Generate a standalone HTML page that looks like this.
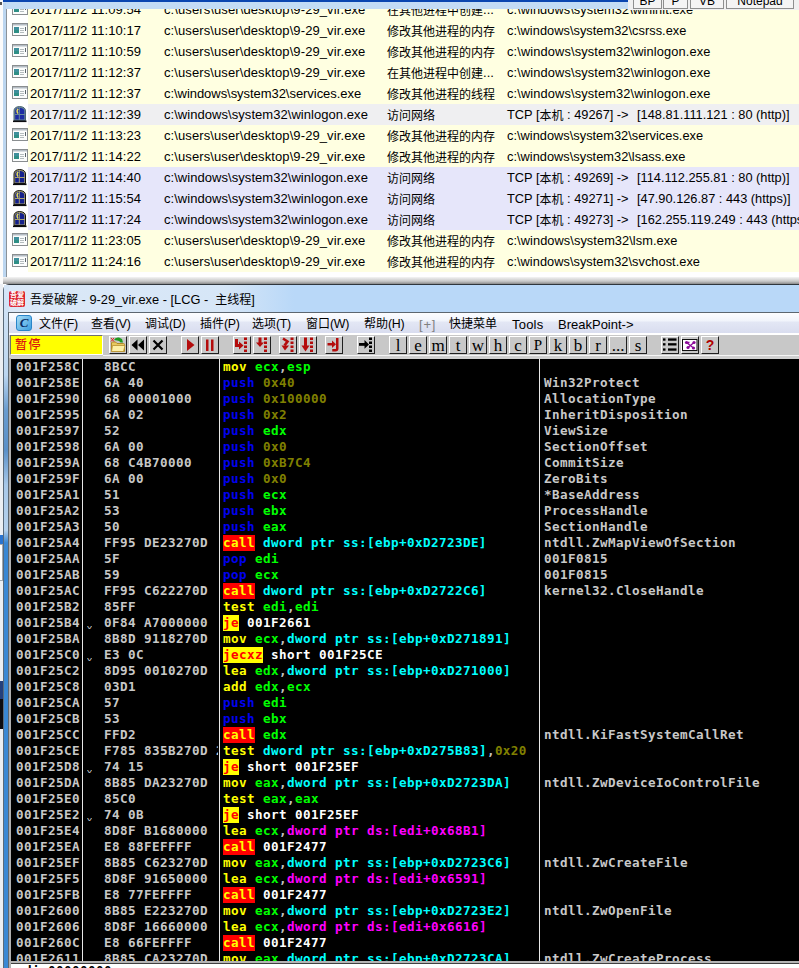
<!DOCTYPE html>
<html><head><meta charset="utf-8"><title>LCG</title>
<style>
html,body{margin:0;padding:0}
body{width:799px;height:968px;position:relative;overflow:hidden;background:#fff;font-family:"Liberation Sans","Noto Sans CJK SC",sans-serif;font-size:12px;color:#000}
div,svg{position:absolute;box-sizing:border-box}
i{font-style:normal;font-size:12px}
#top{left:0;top:0;width:799px;height:284px;background:#fff;overflow:hidden}
#list{left:7px;top:9px;width:792px;height:263px;overflow:hidden;background:#fff}
#listin{left:-7px;top:-9px;width:799px;height:290px}
.lr{left:28px;width:771px;height:21px;white-space:pre;font-size:13px;line-height:21px}
.ry{background:#ffffe1} .rg{background:#efeff1} .rl{background:#e6e6fa}
.lr>span{position:absolute;top:0;height:21px} .lr i{position:relative;top:1px}
.ic{left:-16px;top:3px} .ic2{left:-15px;top:2px}
.c1{left:2px;letter-spacing:.05px} .c2{left:136px} .c3{left:359px} .c4{left:479px;font-size:12.8px} .c5{left:609px;font-size:12.8px}
#dis{left:11px;top:359px;width:788px;height:603px;background:#000;overflow:hidden;font-family:"DejaVu Sans Mono","Liberation Mono",monospace;font-weight:bold;font-size:12.6px;letter-spacing:0.414px;white-space:pre}
.dr{left:0;width:788px;height:16px;line-height:15px}
.dr>span{position:absolute;top:0;height:16px;line-height:15px}
.a{left:5px;color:#c8c8c8} .h{left:93px;color:#c8c8c8;width:114px;overflow:hidden} .d{left:212px} .k{left:533px;color:#c8c8c8}
.mk{left:76px;color:#d0d0d0;font-family:'Liberation Sans',sans-serif;font-size:10px;letter-spacing:0;top:3px!important;font-weight:normal;transform:scaleY(.6);transform-origin:50% 70%}
.y{color:#ff0} .b{color:#0000f0} .g{color:#0f0} .o{color:#808000} .w{color:#c0c0c0} .W{color:#fff} .c{color:#0ff} .m{color:#f0f}
.cl,.j{display:inline-block;height:16px;line-height:15px;vertical-align:top}
.cl{color:#ff0;background:#f00} .j{color:#f00;background:#ff0}
.vl{top:0;width:1px;height:603px;background:#e8e8e8}
.tb{top:336px;height:18px;background:#c8c8c8;border:1px solid;border-color:#fff #202020 #202020 #fff}
.tb svg{left:0;top:0}
.lt{position:absolute;left:0;top:-1px;width:16px;text-align:center;font-family:"Liberation Serif",serif;font-size:17px;line-height:19px}
.q{position:absolute;left:0;top:0;width:16px;text-align:center;font-family:"Liberation Sans",sans-serif;font-weight:bold;font-size:14px;line-height:16px;color:#b00000}
.mi{top:314px;height:21px;line-height:21px;font-size:12.4px;letter-spacing:-.35px;white-space:pre} .mi i{letter-spacing:0}
.tab{top:-10px;height:19px;border:1px solid #8e8f8f;background:#f4f4f4;text-align:center;line-height:21px;font-size:12px}
</style></head><body>
<div id="top">
<div style="left:0;top:0;width:799px;height:2px;background:#0a46b0"></div>
<div style="left:0;top:2px;width:799px;height:7px;background:#c3dcf5"></div>
<div style="left:0;top:0;width:3px;height:284px;background:#fbfbfb"></div><div style="left:0;top:2px;width:2px;height:3px;background:#555"></div>
<div style="left:3px;top:3px;width:3px;height:276px;background:#bcd6f0"></div>
<div style="left:6px;top:9px;width:1px;height:268px;background:#8a9299"></div>
<div id="list"><div id="listin">
<div class="lr ry" style="top:-1px"><svg class="ic" width="16" height="13" viewBox="0 0 16 13"><rect x="0.5" y="0.5" width="15" height="12" fill="#fbfcfc" stroke="#8a8e90"/><rect x="1" y="1" width="14" height="1.500" fill="#b4bcc4"/><rect x="2" y="4" width="5" height="6" fill="#2f8f86"/><rect x="2" y="4" width="5" height="3" fill="#3f8f9c"/><rect x="8" y="5" width="4" height="1" fill="#b4bcbe"/><rect x="8" y="7" width="4" height="1" fill="#b4bcbe"/><rect x="8" y="9" width="4" height="1" fill="#b4bcbe"/><rect x="13" y="4" width="1" height="4" fill="#5a666c"/></svg><span class="c1">2017/11/2 11:09:54</span><span class="c2" style="letter-spacing:0.1px">c:\users\user\desktop\9-29_vir.exe</span><span class="c3"><i>在其他进程中创建</i>...</span><span class="c4" style="letter-spacing:0.065px">c:\windows\system32\wininit.exe</span></div>
<div class="lr ry" style="top:20px"><svg class="ic" width="16" height="13" viewBox="0 0 16 13"><rect x="0.5" y="0.5" width="15" height="12" fill="#fbfcfc" stroke="#8a8e90"/><rect x="1" y="1" width="14" height="1.500" fill="#b4bcc4"/><rect x="2" y="4" width="5" height="6" fill="#2f8f86"/><rect x="2" y="4" width="5" height="3" fill="#3f8f9c"/><rect x="8" y="5" width="4" height="1" fill="#b4bcbe"/><rect x="8" y="7" width="4" height="1" fill="#b4bcbe"/><rect x="8" y="9" width="4" height="1" fill="#b4bcbe"/><rect x="13" y="4" width="1" height="4" fill="#5a666c"/></svg><span class="c1">2017/11/2 11:10:17</span><span class="c2" style="letter-spacing:0.1px">c:\users\user\desktop\9-29_vir.exe</span><span class="c3"><i>修改其他进程的内存</i></span><span class="c4" style="letter-spacing:0.03px">c:\windows\system32\csrss.exe</span></div>
<div class="lr ry" style="top:41px"><svg class="ic" width="16" height="13" viewBox="0 0 16 13"><rect x="0.5" y="0.5" width="15" height="12" fill="#fbfcfc" stroke="#8a8e90"/><rect x="1" y="1" width="14" height="1.500" fill="#b4bcc4"/><rect x="2" y="4" width="5" height="6" fill="#2f8f86"/><rect x="2" y="4" width="5" height="3" fill="#3f8f9c"/><rect x="8" y="5" width="4" height="1" fill="#b4bcbe"/><rect x="8" y="7" width="4" height="1" fill="#b4bcbe"/><rect x="8" y="9" width="4" height="1" fill="#b4bcbe"/><rect x="13" y="4" width="1" height="4" fill="#5a666c"/></svg><span class="c1">2017/11/2 11:10:59</span><span class="c2" style="letter-spacing:0.1px">c:\users\user\desktop\9-29_vir.exe</span><span class="c3"><i>修改其他进程的内存</i></span><span class="c4" style="letter-spacing:0.135px">c:\windows\system32\winlogon.exe</span></div>
<div class="lr ry" style="top:62px"><svg class="ic" width="16" height="13" viewBox="0 0 16 13"><rect x="0.5" y="0.5" width="15" height="12" fill="#fbfcfc" stroke="#8a8e90"/><rect x="1" y="1" width="14" height="1.500" fill="#b4bcc4"/><rect x="2" y="4" width="5" height="6" fill="#2f8f86"/><rect x="2" y="4" width="5" height="3" fill="#3f8f9c"/><rect x="8" y="5" width="4" height="1" fill="#b4bcbe"/><rect x="8" y="7" width="4" height="1" fill="#b4bcbe"/><rect x="8" y="9" width="4" height="1" fill="#b4bcbe"/><rect x="13" y="4" width="1" height="4" fill="#5a666c"/></svg><span class="c1">2017/11/2 11:12:37</span><span class="c2" style="letter-spacing:0.1px">c:\users\user\desktop\9-29_vir.exe</span><span class="c3"><i>在其他进程中创建</i>...</span><span class="c4" style="letter-spacing:0.135px">c:\windows\system32\winlogon.exe</span></div>
<div class="lr ry" style="top:83px"><svg class="ic" width="16" height="13" viewBox="0 0 16 13"><rect x="0.5" y="0.5" width="15" height="12" fill="#fbfcfc" stroke="#8a8e90"/><rect x="1" y="1" width="14" height="1.500" fill="#b4bcc4"/><rect x="2" y="4" width="5" height="6" fill="#2f8f86"/><rect x="2" y="4" width="5" height="3" fill="#3f8f9c"/><rect x="8" y="5" width="4" height="1" fill="#b4bcbe"/><rect x="8" y="7" width="4" height="1" fill="#b4bcbe"/><rect x="8" y="9" width="4" height="1" fill="#b4bcbe"/><rect x="13" y="4" width="1" height="4" fill="#5a666c"/></svg><span class="c1">2017/11/2 11:12:37</span><span class="c2" style="letter-spacing:-0.05px">c:\windows\system32\services.exe</span><span class="c3"><i>修改其他进程的线程</i></span><span class="c4" style="letter-spacing:0.135px">c:\windows\system32\winlogon.exe</span></div>
<div class="lr rg" style="top:104px"><svg class="ic2" width="14" height="17" viewBox="0 0 14 17"><path d="M1 14.500V5Q1 0.800 6.500 0.500Q12.500 0.800 12.500 5V14.500Z" fill="#6a8a9a" stroke="#4a6474" stroke-width="1"/><path d="M2.200 8V5Q2.200 2.200 5.800 1.700V8Z" fill="#1c2ca4"/><path d="M6.800 8V1.700Q11.300 2.200 11.300 5V8Z" fill="#1c2ca4"/><rect x="2.200" y="9" width="3.600" height="4.500" fill="#1c2ca4"/><rect x="6.800" y="9" width="4.500" height="4.500" fill="#1c2ca4"/><path d="M5.200 2.800Q3 5 5 7.600" stroke="#e4dc58" stroke-width="1.400" fill="none"/><path d="M0 15.300h13.500" stroke="#0c0c10" stroke-width="1.600"/></svg><span class="c1">2017/11/2 11:12:39</span><span class="c2" style="letter-spacing:0.05px">c:\windows\system32\winlogon.exe</span><span class="c3"><i>访问网络</i></span><span class="c4">TCP [<i>本机</i> : 49267] -&gt;</span><span class="c5">[148.81.111.121 : 80 (http)]</span></div>
<div class="lr ry" style="top:125px"><svg class="ic" width="16" height="13" viewBox="0 0 16 13"><rect x="0.5" y="0.5" width="15" height="12" fill="#fbfcfc" stroke="#8a8e90"/><rect x="1" y="1" width="14" height="1.500" fill="#b4bcc4"/><rect x="2" y="4" width="5" height="6" fill="#2f8f86"/><rect x="2" y="4" width="5" height="3" fill="#3f8f9c"/><rect x="8" y="5" width="4" height="1" fill="#b4bcbe"/><rect x="8" y="7" width="4" height="1" fill="#b4bcbe"/><rect x="8" y="9" width="4" height="1" fill="#b4bcbe"/><rect x="13" y="4" width="1" height="4" fill="#5a666c"/></svg><span class="c1">2017/11/2 11:13:23</span><span class="c2" style="letter-spacing:0.1px">c:\users\user\desktop\9-29_vir.exe</span><span class="c3"><i>修改其他进程的内存</i></span><span class="c4" style="letter-spacing:0.015px">c:\windows\system32\services.exe</span></div>
<div class="lr ry" style="top:146px"><svg class="ic" width="16" height="13" viewBox="0 0 16 13"><rect x="0.5" y="0.5" width="15" height="12" fill="#fbfcfc" stroke="#8a8e90"/><rect x="1" y="1" width="14" height="1.500" fill="#b4bcc4"/><rect x="2" y="4" width="5" height="6" fill="#2f8f86"/><rect x="2" y="4" width="5" height="3" fill="#3f8f9c"/><rect x="8" y="5" width="4" height="1" fill="#b4bcbe"/><rect x="8" y="7" width="4" height="1" fill="#b4bcbe"/><rect x="8" y="9" width="4" height="1" fill="#b4bcbe"/><rect x="13" y="4" width="1" height="4" fill="#5a666c"/></svg><span class="c1">2017/11/2 11:14:22</span><span class="c2" style="letter-spacing:0.1px">c:\users\user\desktop\9-29_vir.exe</span><span class="c3"><i>修改其他进程的内存</i></span><span class="c4" style="letter-spacing:0.02px">c:\windows\system32\lsass.exe</span></div>
<div class="lr rl" style="top:167px"><svg class="ic2" width="14" height="17" viewBox="0 0 14 17"><path d="M1 14.500V5Q1 0.800 6.500 0.500Q12.500 0.800 12.500 5V14.500Z" fill="#a8a274" stroke="#14140e" stroke-width="1"/><path d="M2.200 8V5Q2.200 2.200 5.800 1.700V8Z" fill="#14208c"/><path d="M6.800 8V1.700Q11.300 2.200 11.300 5V8Z" fill="#14208c"/><rect x="2.200" y="9" width="3.600" height="4.500" fill="#14208c"/><rect x="6.800" y="9" width="4.500" height="4.500" fill="#14208c"/><path d="M5.200 2.800Q3 5 5 7.600" stroke="#e4dc58" stroke-width="1.400" fill="none"/><path d="M0 15.300h13.500" stroke="#0c0c10" stroke-width="1.600"/></svg><span class="c1">2017/11/2 11:14:40</span><span class="c2" style="letter-spacing:0.05px">c:\windows\system32\winlogon.exe</span><span class="c3"><i>访问网络</i></span><span class="c4">TCP [<i>本机</i> : 49269] -&gt;</span><span class="c5">[114.112.255.81 : 80 (http)]</span></div>
<div class="lr rl" style="top:188px"><svg class="ic2" width="14" height="17" viewBox="0 0 14 17"><path d="M1 14.500V5Q1 0.800 6.500 0.500Q12.500 0.800 12.500 5V14.500Z" fill="#a8a274" stroke="#14140e" stroke-width="1"/><path d="M2.200 8V5Q2.200 2.200 5.800 1.700V8Z" fill="#14208c"/><path d="M6.800 8V1.700Q11.300 2.200 11.300 5V8Z" fill="#14208c"/><rect x="2.200" y="9" width="3.600" height="4.500" fill="#14208c"/><rect x="6.800" y="9" width="4.500" height="4.500" fill="#14208c"/><path d="M5.200 2.800Q3 5 5 7.600" stroke="#e4dc58" stroke-width="1.400" fill="none"/><path d="M0 15.300h13.500" stroke="#0c0c10" stroke-width="1.600"/></svg><span class="c1">2017/11/2 11:15:54</span><span class="c2" style="letter-spacing:0.05px">c:\windows\system32\winlogon.exe</span><span class="c3"><i>访问网络</i></span><span class="c4">TCP [<i>本机</i> : 49271] -&gt;</span><span class="c5">[47.90.126.87 : 443 (https)]</span></div>
<div class="lr rl" style="top:209px"><svg class="ic2" width="14" height="17" viewBox="0 0 14 17"><path d="M1 14.500V5Q1 0.800 6.500 0.500Q12.500 0.800 12.500 5V14.500Z" fill="#a8a274" stroke="#14140e" stroke-width="1"/><path d="M2.200 8V5Q2.200 2.200 5.800 1.700V8Z" fill="#14208c"/><path d="M6.800 8V1.700Q11.300 2.200 11.300 5V8Z" fill="#14208c"/><rect x="2.200" y="9" width="3.600" height="4.500" fill="#14208c"/><rect x="6.800" y="9" width="4.500" height="4.500" fill="#14208c"/><path d="M5.200 2.800Q3 5 5 7.600" stroke="#e4dc58" stroke-width="1.400" fill="none"/><path d="M0 15.300h13.500" stroke="#0c0c10" stroke-width="1.600"/></svg><span class="c1">2017/11/2 11:17:24</span><span class="c2" style="letter-spacing:0.05px">c:\windows\system32\winlogon.exe</span><span class="c3"><i>访问网络</i></span><span class="c4">TCP [<i>本机</i> : 49273] -&gt;</span><span class="c5">[162.255.119.249 : 443 (https)]</span></div>
<div class="lr ry" style="top:230px"><svg class="ic" width="16" height="13" viewBox="0 0 16 13"><rect x="0.5" y="0.5" width="15" height="12" fill="#fbfcfc" stroke="#8a8e90"/><rect x="1" y="1" width="14" height="1.500" fill="#b4bcc4"/><rect x="2" y="4" width="5" height="6" fill="#2f8f86"/><rect x="2" y="4" width="5" height="3" fill="#3f8f9c"/><rect x="8" y="5" width="4" height="1" fill="#b4bcbe"/><rect x="8" y="7" width="4" height="1" fill="#b4bcbe"/><rect x="8" y="9" width="4" height="1" fill="#b4bcbe"/><rect x="13" y="4" width="1" height="4" fill="#5a666c"/></svg><span class="c1">2017/11/2 11:23:05</span><span class="c2" style="letter-spacing:0.1px">c:\users\user\desktop\9-29_vir.exe</span><span class="c3"><i>修改其他进程的内存</i></span><span class="c4" style="letter-spacing:0.07px">c:\windows\system32\lsm.exe</span></div>
<div class="lr ry" style="top:251px"><svg class="ic" width="16" height="13" viewBox="0 0 16 13"><rect x="0.5" y="0.5" width="15" height="12" fill="#fbfcfc" stroke="#8a8e90"/><rect x="1" y="1" width="14" height="1.500" fill="#b4bcc4"/><rect x="2" y="4" width="5" height="6" fill="#2f8f86"/><rect x="2" y="4" width="5" height="3" fill="#3f8f9c"/><rect x="8" y="5" width="4" height="1" fill="#b4bcbe"/><rect x="8" y="7" width="4" height="1" fill="#b4bcbe"/><rect x="8" y="9" width="4" height="1" fill="#b4bcbe"/><rect x="13" y="4" width="1" height="4" fill="#5a666c"/></svg><span class="c1">2017/11/2 11:24:16</span><span class="c2" style="letter-spacing:0.1px">c:\users\user\desktop\9-29_vir.exe</span><span class="c3"><i>修改其他进程的内存</i></span><span class="c4" style="letter-spacing:0.03px">c:\windows\system32\svchost.exe</span></div>
</div></div>
<div style="left:628px;top:0;width:171px;height:10px;background:#f0f0f0;overflow:hidden">
<div class="tab" style="left:5px;width:29px">BP</div>
<div class="tab" style="left:35px;width:25px">P</div>
<div class="tab" style="left:62px;width:34px">VB</div>
<div class="tab" style="left:98px;width:68px">Notepad</div>
</div>
<div style="left:3px;top:277px;width:796px;height:7px;background:linear-gradient(#f4f4f4,#c8c8c8 60%,#8a8a8a)"></div>
</div>

<div id="win" style="left:0;top:284px;width:799px;height:684px">
<div style="left:3px;top:0;width:796px;height:684px;background:linear-gradient(90deg,#dbe8f7 0,#d6e6f7 220px,#b9d8f8 290px);border-top:1px solid #30363c;border-left:1px solid #5a6a7a;border-top-left-radius:6px"></div>
<div style="left:0;top:0;width:3px;height:684px;background:#eceff3"></div>
<div style="left:0;top:251px;width:3px;height:9px;background:#2a74d0"></div>
<div style="left:0;top:260px;width:3px;height:37px;background:#fff;border:1px solid #a0a8b0;border-left:0"></div>
<div style="left:0;top:397px;width:3px;height:18px;background:#24407c"></div>
<div style="left:0;top:415px;width:3px;height:30px;background:#0c0c10"></div>
<div style="left:4px;top:1px;width:5px;height:683px;background:linear-gradient(#d6e6f7 0,#bcd6f0 90px,#6a9ccf 125px,#5a90c8 165px,#a8c8e8 200px,#b4d0ec 245px,#3a88d4 258px,#3a88d4 683px)"></div>
</div>
<div style="left:9px;top:291px;width:16px;height:16px;background:#dc2430;border-radius:2px;overflow:hidden;color:#fff;font-size:7px;line-height:8px;font-weight:bold;text-align:center;white-space:pre">吾爱
破解</div>
<div style="left:30px;top:289px;font-size:12.8px;line-height:21px;white-space:pre"><i>吾爱破解</i> - 9-29_vir.exe - [LCG -  <i>主线程</i>]</div>

<div style="left:8px;top:312px;width:791px;height:656px;background:#c8c8c8;border-left:1px solid #5c6670;border-top:1px solid #5c6670"></div>
<div style="left:9px;top:313px;width:790px;height:20px;background:linear-gradient(#fcfdff 0,#f1f4fb 40%,#e3e7f5 45%,#d9ddef 100%)"></div>
<div style="left:9px;top:333px;width:790px;height:2px;background:#fff"></div>
<div style="left:16px;top:315px;width:16px;height:16px;border-radius:3px;background:linear-gradient(135deg,#a8dcf6,#3c9fe0);border:1px solid #2a84c8;color:#0a2c64;font-family:'Liberation Serif',serif;font-weight:bold;font-style:italic;font-size:13px;line-height:14px;text-align:center">C</div>
<div class="mi" style="left:39px"><i>文件</i>(F)</div>
<div class="mi" style="left:91px"><i>查看</i>(V)</div>
<div class="mi" style="left:145px"><i>调试</i>(D)</div>
<div class="mi" style="left:200px"><i>插件</i>(P)</div>
<div class="mi" style="left:252px"><i>选项</i>(T)</div>
<div class="mi" style="left:306px"><i>窗口</i>(W)</div>
<div class="mi" style="left:364px"><i>帮助</i>(H)</div>
<div class="mi" style="left:419px;color:#808080;font-size:13px;letter-spacing:.8px">[+]</div>
<div class="mi" style="left:449px"><i>快捷菜单</i></div>
<div class="mi" style="left:512px;font-size:13px;letter-spacing:.2px">Tools</div>
<div class="mi" style="left:558px;font-size:13px;letter-spacing:0">BreakPoint-&gt;</div>

<div style="left:10px;top:335px;width:93px;height:20px;background:#ff0;border:1px solid;border-color:#707070 #fff #fff #707070;color:#dc1410;font-size:12px;font-weight:500;line-height:18px;padding-left:4px;white-space:pre;letter-spacing:1.5px">暂停</div>
<div class="tb" style="left:109px;width:18px"><svg width="16" height="16" viewBox="0 0 16 16"><path d="M1.500 14.500V6q0-1 1-1h3l1.500 1.500h6.500q1 0 1 1v7z" fill="#e8c860" stroke="#b08a28" stroke-width="1"/><path d="M1.500 14.500l1-6h12.500l-1.500 6z" fill="#fdf0a8" stroke="#b89030" stroke-width=".8"/><path d="M4 3q1-3 5-2.500l3 1.500 1 3.500h-2.500q-1-2-3.500-2z" fill="#1f9a1f"/><path d="M1 1l3 3.500M4 1L1 4.500" stroke="#e02020" stroke-width="1"/></svg></div>
<div class="tb" style="left:129px;width:18px"><svg width="16" height="16" viewBox="0 0 16 16"><path d="M7.500 2.500v11L1.500 8zM14 2.500v11L8 8z" fill="#000"/></svg></div>
<div class="tb" style="left:149px;width:18px"><svg width="16" height="16" viewBox="0 0 16 16"><path d="M3.500 3.500l9 9M12.500 3.500l-9 9" stroke="#000" stroke-width="2.200"/></svg></div>
<div class="tb" style="left:181px;width:18px"><svg width="16" height="16" viewBox="0 0 16 16"><path d="M5 2l7.500 6-7.500 6z" fill="#b40c0c"/></svg></div>
<div class="tb" style="left:201px;width:18px"><svg width="16" height="16" viewBox="0 0 16 16"><rect x="4" y="2.500" width="2.500" height="11.500" fill="#b40c0c"/><rect x="9" y="2.500" width="2.500" height="11.500" fill="#b40c0c"/></svg></div>
<div class="tb" style="left:233px;width:18px"><svg width="16" height="16" viewBox="0 0 16 16"><path d="M1 2h3v5h2v3H1z" fill="#b40c0c"/><path d="M5 4.500l4.500 4-4.500 4z" fill="#b40c0c"/><rect x="10" y="0.5" width="3" height="2.500" fill="#b40c0c"/><rect x="10" y="4.5" width="3" height="2.500" fill="#b40c0c"/><rect x="10" y="8.5" width="3" height="2.500" fill="#b40c0c"/><rect x="10" y="12.5" width="3" height="2.500" fill="#b40c0c"/></svg></div>
<div class="tb" style="left:253px;width:18px"><svg width="16" height="16" viewBox="0 0 16 16"><rect x="4.500" y="0.500" width="3" height="6" fill="#b40c0c"/><path d="M2 5.500h8L6 10z" fill="#b40c0c"/><rect x="10" y="0.5" width="3" height="2.500" fill="#b40c0c"/><rect x="10" y="4.5" width="3" height="2.500" fill="#b40c0c"/><rect x="10" y="8.5" width="3" height="2.500" fill="#b40c0c"/><rect x="10" y="12.5" width="3" height="2.500" fill="#b40c0c"/></svg></div>
<div class="tb" style="left:279px;width:18px"><svg width="16" height="16" viewBox="0 0 16 16"><path d="M3 1.500L7.500 4.500 4.500 8.500" stroke="#b40c0c" stroke-width="2.600" fill="none"/><path d="M1.500 8.500h7.500L5 13.500z" fill="#b40c0c"/><rect x="10.5" y="0.5" width="3" height="2.500" fill="#b40c0c"/><rect x="10.5" y="4.5" width="3" height="2.500" fill="#b40c0c"/><rect x="10.5" y="8.5" width="3" height="2.500" fill="#b40c0c"/><rect x="10.5" y="12.5" width="3" height="2.500" fill="#b40c0c"/></svg></div>
<div class="tb" style="left:299px;width:18px"><svg width="16" height="16" viewBox="0 0 16 16"><rect x="4" y="0.500" width="3" height="9" fill="#b40c0c"/><path d="M1.500 8.500h8L5.500 14.500z" fill="#b40c0c"/><rect x="10" y="0.5" width="3" height="2.500" fill="#b40c0c"/><rect x="10" y="4.5" width="3" height="2.500" fill="#b40c0c"/><rect x="10" y="8.5" width="3" height="2.500" fill="#b40c0c"/><rect x="10" y="12.5" width="3" height="2.500" fill="#b40c0c"/></svg></div>
<div class="tb" style="left:325px;width:18px"><svg width="16" height="16" viewBox="0 0 16 16"><rect x="1.500" y="6" width="5.500" height="2.500" fill="#b40c0c"/><path d="M6 3.500l4 3.750-4 3.750z" fill="#b40c0c"/><path d="M11.250 1v10.500q0 1.750-2 1.750h-3" stroke="#b40c0c" stroke-width="2.500" fill="none"/></svg></div>
<div class="tb" style="left:357px;width:18px"><svg width="16" height="16" viewBox="0 0 16 16"><rect x="1" y="6" width="6.500" height="2.800" fill="#000"/><path d="M6.500 3l4.500 4.400-4.500 4.400z" fill="#000"/><rect x="11" y="0.5" width="3" height="2.500" fill="#000"/><rect x="11" y="4.5" width="3" height="2.500" fill="#000"/><rect x="11" y="8.5" width="3" height="2.500" fill="#000"/><rect x="11" y="12.5" width="3" height="2.500" fill="#000"/></svg></div>
<div class="tb" style="left:389px;width:18px"><span class="lt">l</span></div>
<div class="tb" style="left:409px;width:18px"><span class="lt">e</span></div>
<div class="tb" style="left:429px;width:18px"><span class="lt">m</span></div>
<div class="tb" style="left:449px;width:18px"><span class="lt">t</span></div>
<div class="tb" style="left:469px;width:18px"><span class="lt">w</span></div>
<div class="tb" style="left:489px;width:18px"><span class="lt">h</span></div>
<div class="tb" style="left:509px;width:18px"><span class="lt">c</span></div>
<div class="tb" style="left:529px;width:18px"><span class="lt" style="font-size:15px;top:-1.500px">P</span></div>
<div class="tb" style="left:549px;width:18px"><span class="lt">k</span></div>
<div class="tb" style="left:569px;width:18px"><span class="lt">b</span></div>
<div class="tb" style="left:589px;width:18px"><span class="lt">r</span></div>
<div class="tb" style="left:609px;width:18px"><span class="lt">...</span></div>
<div class="tb" style="left:629px;width:18px"><span class="lt">s</span></div>
<div class="tb" style="left:661px;width:18px"><svg width="16" height="16" viewBox="0 0 16 16"><rect x="1" y="1.4" width="2.500" height="2.300" fill="#000"/><rect x="6" y="1.4" width="8.500" height="2.300" fill="#000"/><rect x="1" y="6.2" width="2.500" height="2.300" fill="#000"/><rect x="6" y="6.2" width="8.500" height="2.300" fill="#000"/><rect x="1" y="11.4" width="2.500" height="2.300" fill="#000"/><rect x="6" y="11.4" width="8.500" height="2.300" fill="#000"/></svg></div>
<div class="tb" style="left:681px;width:18px"><svg width="16" height="16" viewBox="0 0 16 16"><rect x="0.500" y="2.500" width="14.500" height="11" fill="#fff" stroke="#101010"/><circle cx="4.500" cy="5.500" r="1.600" fill="#8a0a9a"/><circle cx="12" cy="5.500" r="1.600" fill="#8a0a9a"/><circle cx="6" cy="10.500" r="1.600" fill="#8a0a9a"/><circle cx="11.500" cy="11" r="1.600" fill="#8a0a9a"/><path d="M4.500 5.500L11.500 11M12 5.500L6 10.500M4.500 5.500h3" stroke="#8a0a9a" stroke-width="1.300"/></svg></div>
<div class="tb" style="left:701px;width:18px"><span class="q">?</span></div>
<div style="left:103px;top:355px;width:696px;height:1px;background:#f4f4f4"></div>
<div style="left:9px;top:356px;width:790px;height:3px;background:#d0d0d0"></div>
<div style="left:9px;top:358px;width:2px;height:610px;background:#b0b0b0"></div>
<div id="dis">
<div class="dr" style="top:0px"><span class="a">001F258C</span><span class="h">8BCC</span><span class="d"><span class="y">mov </span><span class="g">ecx</span><span class="w">,</span><span class="g">esp</span></span></div>
<div class="dr" style="top:16px"><span class="a">001F258E</span><span class="h">6A 40</span><span class="d"><span class="b">push </span><span class="o">0x40</span></span><span class="k">Win32Protect</span></div>
<div class="dr" style="top:32px"><span class="a">001F2590</span><span class="h">68 00001000</span><span class="d"><span class="b">push </span><span class="o">0x100000</span></span><span class="k">AllocationType</span></div>
<div class="dr" style="top:48px"><span class="a">001F2595</span><span class="h">6A 02</span><span class="d"><span class="b">push </span><span class="o">0x2</span></span><span class="k">InheritDisposition</span></div>
<div class="dr" style="top:64px"><span class="a">001F2597</span><span class="h">52</span><span class="d"><span class="b">push </span><span class="g">edx</span></span><span class="k">ViewSize</span></div>
<div class="dr" style="top:80px"><span class="a">001F2598</span><span class="h">6A 00</span><span class="d"><span class="b">push </span><span class="o">0x0</span></span><span class="k">SectionOffset</span></div>
<div class="dr" style="top:96px"><span class="a">001F259A</span><span class="h">68 C4B70000</span><span class="d"><span class="b">push </span><span class="o">0xB7C4</span></span><span class="k">CommitSize</span></div>
<div class="dr" style="top:112px"><span class="a">001F259F</span><span class="h">6A 00</span><span class="d"><span class="b">push </span><span class="o">0x0</span></span><span class="k">ZeroBits</span></div>
<div class="dr" style="top:128px"><span class="a">001F25A1</span><span class="h">51</span><span class="d"><span class="b">push </span><span class="g">ecx</span></span><span class="k">*BaseAddress</span></div>
<div class="dr" style="top:144px"><span class="a">001F25A2</span><span class="h">53</span><span class="d"><span class="b">push </span><span class="g">ebx</span></span><span class="k">ProcessHandle</span></div>
<div class="dr" style="top:160px"><span class="a">001F25A3</span><span class="h">50</span><span class="d"><span class="b">push </span><span class="g">eax</span></span><span class="k">SectionHandle</span></div>
<div class="dr" style="top:176px"><span class="a">001F25A4</span><span class="h">FF95 DE23270D</span><span class="d"><span class="cl">call</span><span class="c"> dword ptr ss:[ebp+0xD2723DE]</span></span><span class="k">ntdll.ZwMapViewOfSection</span></div>
<div class="dr" style="top:192px"><span class="a">001F25AA</span><span class="h">5F</span><span class="d"><span class="b">pop </span><span class="g">edi</span></span><span class="k">001F0815</span></div>
<div class="dr" style="top:208px"><span class="a">001F25AB</span><span class="h">59</span><span class="d"><span class="b">pop </span><span class="g">ecx</span></span><span class="k">001F0815</span></div>
<div class="dr" style="top:224px"><span class="a">001F25AC</span><span class="h">FF95 C622270D</span><span class="d"><span class="cl">call</span><span class="c"> dword ptr ss:[ebp+0xD2722C6]</span></span><span class="k">kernel32.CloseHandle</span></div>
<div class="dr" style="top:240px"><span class="a">001F25B2</span><span class="h">85FF</span><span class="d"><span class="y">test </span><span class="g">edi</span><span class="w">,</span><span class="g">edi</span></span></div>
<div class="dr" style="top:256px"><span class="a">001F25B4</span><span class="mk">v</span><span class="h">0F84 A7000000</span><span class="d"><span class="j">je</span><span class="W"> 001F2661</span></span></div>
<div class="dr" style="top:272px"><span class="a">001F25BA</span><span class="h">8B8D 9118270D</span><span class="d"><span class="y">mov </span><span class="g">ecx</span><span class="w">,</span><span class="c">dword ptr ss:[ebp+0xD271891]</span></span></div>
<div class="dr" style="top:288px"><span class="a">001F25C0</span><span class="mk">v</span><span class="h">E3 0C</span><span class="d"><span class="j">jecxz</span><span class="W"> short 001F25CE</span></span></div>
<div class="dr" style="top:304px"><span class="a">001F25C2</span><span class="h">8D95 0010270D</span><span class="d"><span class="y">lea </span><span class="g">edx</span><span class="w">,</span><span class="c">dword ptr ss:[ebp+0xD271000]</span></span></div>
<div class="dr" style="top:320px"><span class="a">001F25C8</span><span class="h">03D1</span><span class="d"><span class="y">add </span><span class="g">edx</span><span class="w">,</span><span class="g">ecx</span></span></div>
<div class="dr" style="top:336px"><span class="a">001F25CA</span><span class="h">57</span><span class="d"><span class="b">push </span><span class="g">edi</span></span></div>
<div class="dr" style="top:352px"><span class="a">001F25CB</span><span class="h">53</span><span class="d"><span class="b">push </span><span class="g">ebx</span></span></div>
<div class="dr" style="top:368px"><span class="a">001F25CC</span><span class="h">FFD2</span><span class="d"><span class="cl">call</span><span class="g"> edx</span></span><span class="k">ntdll.KiFastSystemCallRet</span></div>
<div class="dr" style="top:384px"><span class="a">001F25CE</span><span class="h">F785 835B270D 2</span><span class="d"><span class="y">test </span><span class="c">dword ptr ss:[ebp+0xD275B83]</span><span class="w">,</span><span class="o">0x20</span></span></div>
<div class="dr" style="top:400px"><span class="a">001F25D8</span><span class="mk">v</span><span class="h">74 15</span><span class="d"><span class="j">je</span><span class="W"> short 001F25EF</span></span></div>
<div class="dr" style="top:416px"><span class="a">001F25DA</span><span class="h">8B85 DA23270D</span><span class="d"><span class="y">mov </span><span class="g">eax</span><span class="w">,</span><span class="c">dword ptr ss:[ebp+0xD2723DA]</span></span><span class="k">ntdll.ZwDeviceIoControlFile</span></div>
<div class="dr" style="top:432px"><span class="a">001F25E0</span><span class="h">85C0</span><span class="d"><span class="y">test </span><span class="g">eax</span><span class="w">,</span><span class="g">eax</span></span></div>
<div class="dr" style="top:448px"><span class="a">001F25E2</span><span class="mk">v</span><span class="h">74 0B</span><span class="d"><span class="j">je</span><span class="W"> short 001F25EF</span></span></div>
<div class="dr" style="top:464px"><span class="a">001F25E4</span><span class="h">8D8F B1680000</span><span class="d"><span class="y">lea </span><span class="g">ecx</span><span class="w">,</span><span class="m">dword ptr ds:[edi+0x68B1]</span></span></div>
<div class="dr" style="top:480px"><span class="a">001F25EA</span><span class="h">E8 88FEFFFF</span><span class="d"><span class="cl">call</span><span class="W"> 001F2477</span></span></div>
<div class="dr" style="top:496px"><span class="a">001F25EF</span><span class="h">8B85 C623270D</span><span class="d"><span class="y">mov </span><span class="g">eax</span><span class="w">,</span><span class="c">dword ptr ss:[ebp+0xD2723C6]</span></span><span class="k">ntdll.ZwCreateFile</span></div>
<div class="dr" style="top:512px"><span class="a">001F25F5</span><span class="h">8D8F 91650000</span><span class="d"><span class="y">lea </span><span class="g">ecx</span><span class="w">,</span><span class="m">dword ptr ds:[edi+0x6591]</span></span></div>
<div class="dr" style="top:528px"><span class="a">001F25FB</span><span class="h">E8 77FEFFFF</span><span class="d"><span class="cl">call</span><span class="W"> 001F2477</span></span></div>
<div class="dr" style="top:544px"><span class="a">001F2600</span><span class="h">8B85 E223270D</span><span class="d"><span class="y">mov </span><span class="g">eax</span><span class="w">,</span><span class="c">dword ptr ss:[ebp+0xD2723E2]</span></span><span class="k">ntdll.ZwOpenFile</span></div>
<div class="dr" style="top:560px"><span class="a">001F2606</span><span class="h">8D8F 16660000</span><span class="d"><span class="y">lea </span><span class="g">ecx</span><span class="w">,</span><span class="m">dword ptr ds:[edi+0x6616]</span></span></div>
<div class="dr" style="top:576px"><span class="a">001F260C</span><span class="h">E8 66FEFFFF</span><span class="d"><span class="cl">call</span><span class="W"> 001F2477</span></span></div>
<div class="dr" style="top:592px"><span class="a">001F2611</span><span class="h">8B85 CA23270D</span><span class="d"><span class="y">mov </span><span class="g">eax</span><span class="w">,</span><span class="c">dword ptr ss:[ebp+0xD2723CA]</span></span><span class="k">ntdll.ZwCreateProcess</span></div>
<div class="vl" style="left:71px"></div>
<div class="vl" style="left:208px"></div>
<div class="vl" style="left:528px"></div>
</div>
<div style="left:11px;top:961px;width:788px;height:2px;background:#b4b4b4"></div>
<div style="left:11px;top:963px;width:788px;height:1px;background:#404040"></div>
<div style="left:11px;top:964px;width:788px;height:4px;background:#fff;overflow:hidden;font-family:'DejaVu Sans Mono',monospace;font-weight:bold;font-size:12.6px;letter-spacing:0.414px;white-space:pre"><span style="position:absolute;left:5px;top:-2px;line-height:18px">edi=00000000</span></div>
</body></html>
